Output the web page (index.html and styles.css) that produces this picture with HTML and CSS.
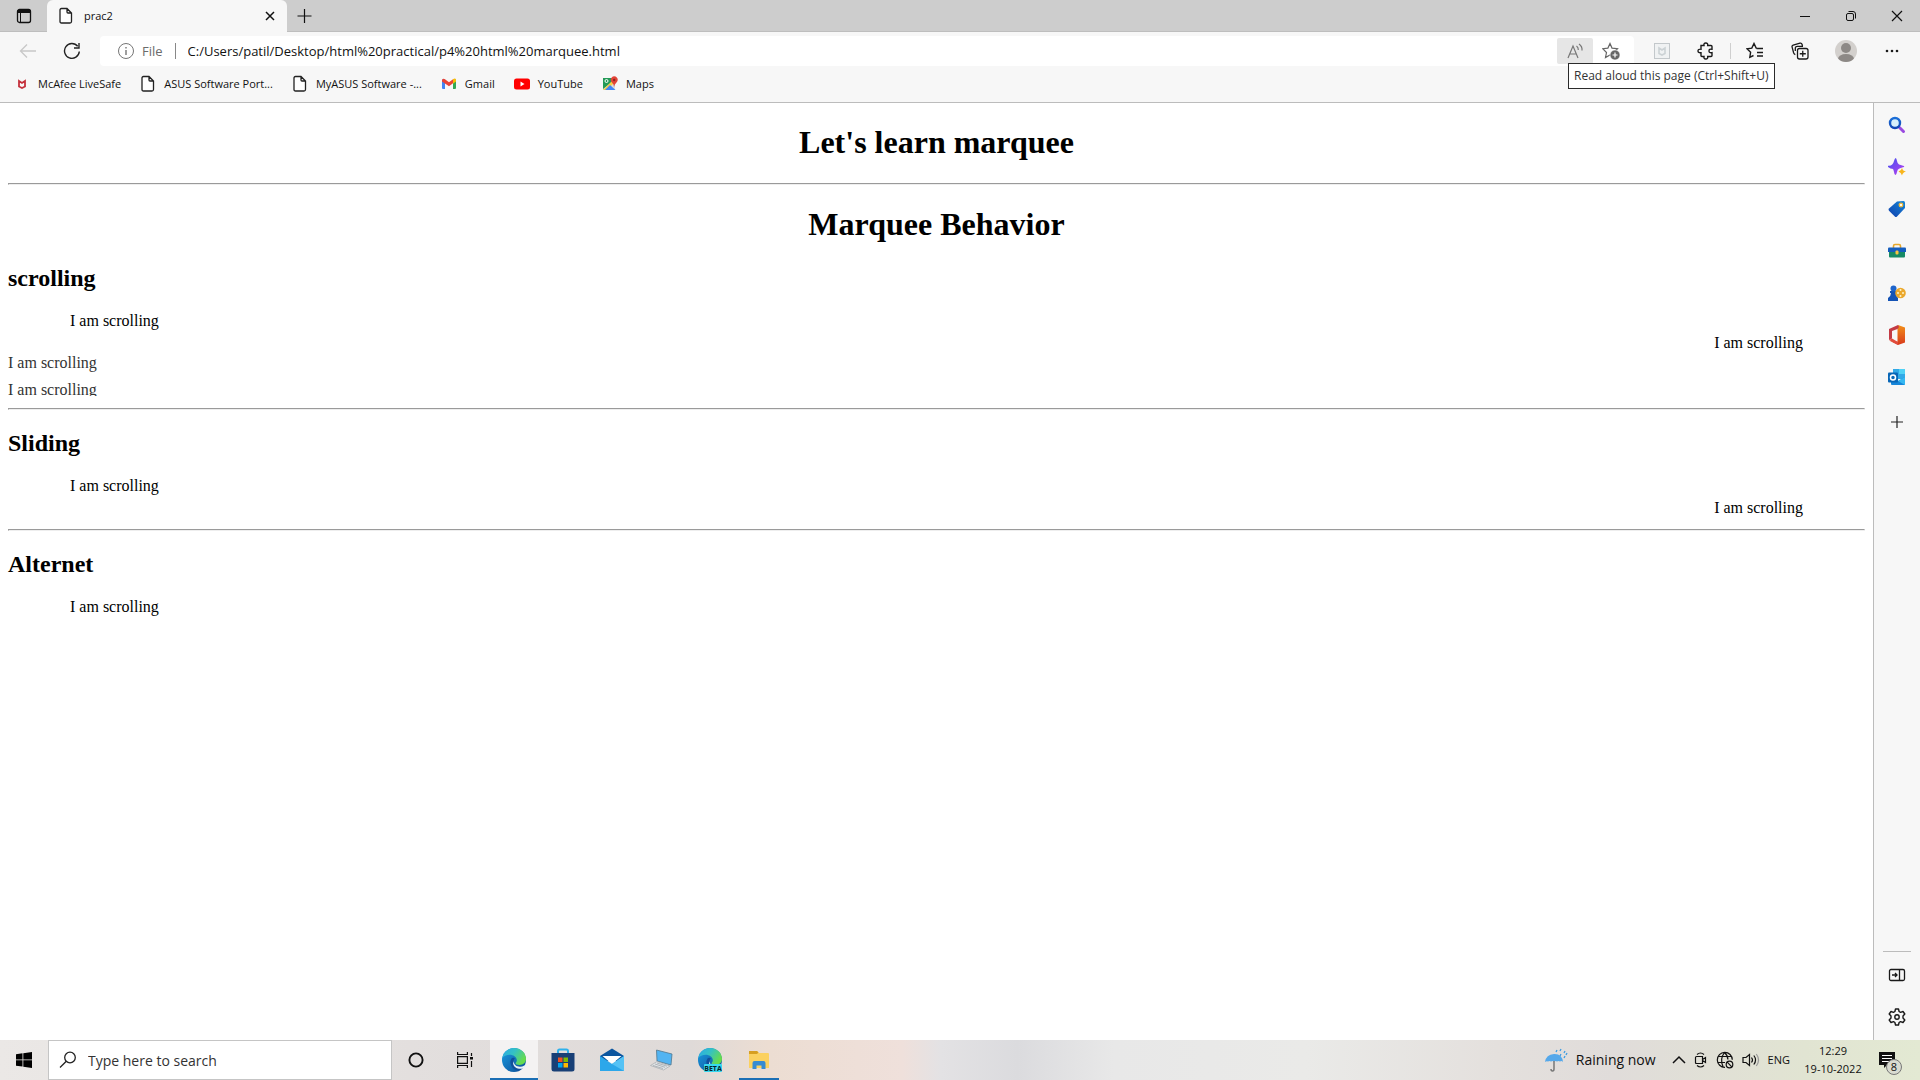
FILE: index.html
```html
<!DOCTYPE html>
<html lang="en">
<head>
<meta charset="utf-8">
<title>prac2</title>
<link rel="stylesheet" href="styles.css">
</head>
<body>
<svg class="defs" aria-hidden="true">
  <defs>
    <linearGradient id="edgeBlue" x1="0" y1="0" x2="1" y2="1"><stop offset="0" stop-color="#1b9de2"/><stop offset="1" stop-color="#0c4a94"/></linearGradient>
    <linearGradient id="edgeGreen" x1="0" y1="0" x2="1" y2="0.5"><stop offset="0" stop-color="#2aa9e8"/><stop offset="0.5" stop-color="#35c1c4"/><stop offset="1" stop-color="#66dc4c"/></linearGradient>
    <linearGradient id="lens" x1="0" y1="0" x2="0" y2="1"><stop offset="0" stop-color="#1b6fd8"/><stop offset="1" stop-color="#1246b4"/></linearGradient>
    <linearGradient id="spark" x1="0" y1="0" x2="1" y2="1"><stop offset="0" stop-color="#3b52f0"/><stop offset="1" stop-color="#c03ff0"/></linearGradient>
    <linearGradient id="tag" x1="1" y1="0" x2="0" y2="1"><stop offset="0" stop-color="#1787d6"/><stop offset="1" stop-color="#0f3fae"/></linearGradient>
    <linearGradient id="office" x1="0" y1="0" x2="0" y2="1"><stop offset="0" stop-color="#f29019"/><stop offset="1" stop-color="#d8391c"/></linearGradient>
    <symbol id="doc" viewBox="0 0 16 18"><path d="M3.5 1.5h5.5l4.500 4.500v8.500q0 1.500-1.500 1.500h-8.500q-1.500 0-1.500-1.500v-11.500q0-1.500 1.500-1.500zM9 1.500v3.500q0 1 1 1h3.500" fill="#fff" stroke="#222" stroke-width="1.300"/></symbol>
    <symbol id="edge" viewBox="0 0 24 24">
      <circle cx="12" cy="12" r="12" fill="url(#edgeBlue)"/>
      <path d="M0.300 10C1.500 4 6.300 0 12 0c7 0 12 5 12 10.800 0 4-3 6.200-6.400 6.200-2.700 0-4.300-1-4-2 .8-1 1.200-1.800 1.200-2.800C14.800 9 11 6.800 7.800 6.800 4.500 6.800 1.500 8.200.3 10z" fill="url(#edgeGreen)"/>
      <path d="M9.500 10.500c-3 4 .2 12 7.500 12 2-.8 4-2.500 5.200-4.600-5 2.200-10.500.2-10.700-4.400 0-1.500.8-2.500 1.500-3-1.200-1-2.700-.8-3.500 0z" fill="#114f9b"/>
      <path d="M11.600 13.300c.2 5 6 6.900 10.800 4.300 1-.6 1.300-.1.800.8l-1.500 1.800c-2 .8-4 .8-6 .2-3.500-1-5.500-4-4.100-7.100z" fill="#e8f1f8"/>
    </symbol>
  </defs>
</svg>

<div class="tab-strip">
  <button class="tab-actions" aria-label="Tab actions menu"><svg width="16" height="16" viewBox="0 0 16 16"><rect x="1.500" y="1.500" width="13" height="13" rx="2" fill="none" stroke="#111" stroke-width="1.300"/><path d="M1.500 2h13v3h-13z" fill="#111"/><path d="M4.500 5v9.500" stroke="#111"/></svg></button>
  <div class="tab">
    <svg width="16" height="18"><use href="#doc"/></svg>
    <span class="tab-title">prac2</span>
    <button class="tab-close" aria-label="Close tab"><svg width="10" height="10" viewBox="0 0 10 10"><path d="M1 1l8 8M9 1L1 9" stroke="#111" stroke-width="1.500"/></svg></button>
  </div>
  <button class="new-tab" aria-label="New tab"><svg width="16" height="16" viewBox="0 0 16 16"><path d="M8.500 1v14M1.500 8h14" stroke="#111" stroke-width="1.200"/></svg></button>
  <div class="window-controls">
    <button aria-label="Minimize"><svg width="12" height="12"><path d="M1 6.500h10" stroke="#111"/></svg></button>
    <button aria-label="Restore"><svg width="12" height="12" viewBox="0 0 12 12" fill="none" stroke="#111"><rect x="1.500" y="3.500" width="7" height="7" rx="1.500"/><path d="M3.500 1.500h4.500q2.500 0 2.500 2.500v4.500"/></svg></button>
    <button aria-label="Close"><svg width="12" height="12"><path d="M1 1l10 10M11 1L1 11" stroke="#111" stroke-width="1.200"/></svg></button>
  </div>
</div>

<div class="toolbar">
  <button class="nav-button" aria-label="Back" disabled><svg width="18" height="16" viewBox="0 0 18 16" fill="none" stroke="#c8c8c8" stroke-width="1.300"><path d="M17 8H1.500M8 1.500L1.500 8 8 14.500"/></svg></button>
  <button class="nav-button" aria-label="Refresh"><svg width="18" height="18" viewBox="0 0 18 18" fill="none" stroke="#222" stroke-width="1.400"><path d="M16.300 9.500a7.400 7.400 0 1 1-1.600-5.200M16 1v5h-5"/></svg></button>
  <div class="address">
    <svg class="info" width="18" height="18" viewBox="0 0 18 18" fill="none" stroke="#767676"><circle cx="9" cy="9" r="7.500"/><path d="M9 8v5M9 5v1.500" stroke-width="1.400"/></svg>
    <label class="scheme" for="url">File</label>
    <input id="url" class="url" type="text" value="C:/Users/patil/Desktop/html%20practical/p4%20html%20marquee.html">
    <div class="read-aloud">
      <button class="read-button" aria-label="Read aloud"><svg width="18" height="18" viewBox="0 0 18 18" fill="none" stroke="#777" stroke-width="1.200"><path d="M2 16L7 4l5 12M3.600 12h6.800M10.500 4q2 1.500 1.800 4M13 2q3.500 2.500 3 6.500"/></svg></button>
      <div class="tooltip" role="tooltip">Read aloud this page (Ctrl+Shift+U)</div>
    </div>
    <button class="star-add" aria-label="Add to favorites"><svg width="18" height="18" viewBox="0 0 18 18"><path d="M8 1.500l2 4.600 5.500.6-4 3.800 1 5-4.500-2.500-4.500 2.500 1-5-3.800-3.800 5.200-.6z" fill="none" stroke="#666" stroke-width="1.200"/><circle cx="13" cy="13" r="5" fill="#666" stroke="#fff" stroke-width=".6"/><path d="M13 10.500v5M10.500 13h5" stroke="#fff" stroke-width="1.200"/></svg></button>
  </div>
  <button class="tool" aria-label="McAfee WebAdvisor"><svg width="16" height="16" viewBox="0 0 16 16" fill="none"><rect x=".5" y=".5" width="15" height="15" fill="#f0f2f3" stroke="#c3c8cb"/><path d="M5 5l3 2 3-2v5.500l-3 1.500-3-1.500z" stroke="#ccd2d5" stroke-width="1.600"/></svg></button>
  <button class="tool" aria-label="Extensions"><svg width="18" height="18" viewBox="0 0 18 18" fill="none" stroke="#1a1a1a" stroke-width="1.400"><path d="M4 3.500h3q-.5-2.500 1.800-2.500t1.900 2.500h3.300q1 0 1 1v2.700q-3-.6-3 1.700t3 1.800v2.800q0 1-1 1h-3.300q.4 2.500-1.900 2.500T7 14.500H5q-1 0-1-1v-2.800q-3 .4-3-1.700t3-1.800z"/></svg></button>
  <span class="divider"></span>
  <button class="tool" aria-label="Favorites"><svg width="18" height="18" viewBox="0 0 18 18" fill="none" stroke="#1a1a1a" stroke-width="1.400"><path d="M14 6.500l-3.800-.4L8 1.500 5.800 6.100 1 6.800l3.600 3.500-.8 5L7.500 13.500M10.500 6.500H17M11 10.500h6M11 14h6"/></svg></button>
  <button class="tool wide" aria-label="Collections"><svg width="18" height="18" viewBox="0 0 18 18" fill="none" stroke="#1a1a1a" stroke-width="1.300"><rect x="6.500" y="6.500" width="10.500" height="10.500" rx="2"/><path d="M11.750 8.800v6M8.800 11.750h6M4.300 12.600Q3 12 2.600 10.700L1.100 5.200q-.4-1.500 1.100-2L9 1.200q1.500-.4 2 1l.5 1.800M4.300 9V6.300q0-2 2-2H12"/></svg></button>
  <button class="tool wide" aria-label="Profile"><svg width="24" height="24" viewBox="0 0 24 24"><clipPath id="face"><circle cx="12" cy="12" r="11"/></clipPath><circle cx="12" cy="12" r="11" fill="#d3d0cd"/><g clip-path="url(#face)" fill="#8d8986"><circle cx="12" cy="9" r="5"/><ellipse cx="12" cy="20" rx="8" ry="5"/></g></svg></button>
  <button class="tool wide" aria-label="Settings and more"><svg width="16" height="4" viewBox="0 0 16 4" fill="#1a1a1a"><circle cx="3" cy="2" r="1.300"/><circle cx="8" cy="2" r="1.300"/><circle cx="13" cy="2" r="1.300"/></svg></button>
</div>

<nav class="bookmarks">
  <a href="#"><svg width="16" height="18" viewBox="0 0 16 18"><path d="M5 6l3 2 3-2v5.500l-3 1.500-3-1.500z" fill="none" stroke="#c4313c" stroke-width="1.800"/></svg>McAfee LiveSafe</a>
  <a href="#"><svg width="16" height="18"><use href="#doc"/></svg>ASUS Software Port...</a>
  <a href="#"><svg width="16" height="18"><use href="#doc"/></svg>MyASUS Software -...</a>
  <a href="#"><svg width="16" height="18" viewBox="0 0 16 18"><path d="M1 4.500h3v9.500H2q-1 0-1-1z" fill="#4285f4"/><path d="M12 4.500h3V13q0 1-1 1h-2z" fill="#34a853"/><path d="M1 5q1-2 3-.8l4 3.100 4-3.100v4L8 11.300 1 6.500z" fill="#ea4335"/><path d="M12 4.200q2.500-1.500 3 .8v1.500l-3 2.300z" fill="#fbbc04"/></svg>Gmail</a>
  <a href="#"><svg width="16" height="18" viewBox="0 0 16 18"><rect y="3.500" width="16" height="11" rx="2.500" fill="#f00"/><path d="M6.500 6.500v5l4-2.500z" fill="#fff"/></svg>YouTube</a>
  <a href="#"><svg width="16" height="18" viewBox="0 0 16 18"><path d="M1 3h12v12H1z" fill="#d9dce0"/><path d="M1 3h9v4L1 14z" fill="#249a57"/><path d="M1 15L11 5l2 2-8 8z" fill="#f9cf45"/><path d="M3 15l5-5 5.500 5z" fill="#4285f4"/><circle cx="4.500" cy="6" r="1.500" fill="none" stroke="#fff"/><path d="M12 12q0-3-2-4.500a3.500 3.500 0 1 1 4.500 0Q12.500 9 12 12z" fill="#e24438"/><circle cx="12.200" cy="5" r="1.200" fill="#8e241d"/></svg>Maps</a>
</nav>

<div class="workspace">
  <main class="page">
    <h1>Let's learn marquee</h1>
    <hr>
    <h1>Marquee Behavior</h1>
    <h2>scrolling</h2>
    <div class="marquees">
      <div class="marquee">I am scrolling</div>
      <div class="marquee right">I am scrolling</div>
    </div>
    <div class="vertical">
      <div>I am scrolling</div>
      <div class="leaving">I am scrolling</div>
    </div>
    <hr>
    <h2>Sliding</h2>
    <div class="marquees">
      <div class="marquee">I am scrolling</div>
      <div class="marquee right">I am scrolling</div>
    </div>
    <hr>
    <h2>Alternet</h2>
    <div class="marquees"><div class="marquee">I am scrolling</div></div>
  </main>
  <aside class="sidebar">
    <button aria-label="Search"><svg width="18" height="18" viewBox="0 0 18 18" fill="none"><path d="M11.500 11.500l4 4" stroke="#9a4be0" stroke-width="3" stroke-linecap="round"/><circle cx="7" cy="7" r="5" fill="#d8f0fb" stroke="url(#lens)" stroke-width="2.400"/></svg></button>
    <button aria-label="Discover"><svg width="18" height="18" viewBox="0 0 18 18"><path d="M7.500 0Q8.500 0 9 3t2 3.500 4 1.200 0 1.600-4 1.500-2 3.200T7.500 17 6 14t-1.800-3.200T.5 9.300t0-1.600T4.200 6.500 6 3 7.500 0z" fill="url(#spark)"/><path d="M14 10q.7 3 4 3.500-3.300.8-4 4-.8-3.200-3.500-4 2.700-.5 3.500-3.500z" fill="#f8b51c"/></svg></button>
    <button aria-label="Shopping"><svg width="18" height="18" viewBox="0 0 18 18"><path d="M9 1.500L15.500 1q1.500 0 1.500 1.500V8l-8 8.500q-1 1-2.200 0L1 10.800q-1-1.200 0-2.300z" fill="url(#tag)"/><circle cx="13" cy="5" r="1.800" fill="#fff" stroke="#f1bb3a" stroke-width="1.300"/></svg></button>
    <button aria-label="Tools"><svg width="18" height="18" viewBox="0 0 18 18"><path d="M5.500 6V4q0-1.500 1.500-1.500h4q1.500 0 1.500 1.500v2" fill="none" stroke="#e7a72a" stroke-width="1.600"/><path d="M1 9h16v5.500q0 1-1 1H2q-1 0-1-1z" fill="#168a66"/><path d="M0 6.500q0-1 1-1h16q1 0 1 1V10H0z" fill="#145dbe"/><rect x="7.500" y="8.500" width="3" height="4" rx="1" fill="#f9c443"/></svg></button>
    <button aria-label="Games"><svg width="18" height="18" viewBox="0 0 18 18"><path d="M2 7h7v2H8q0 3 2 5v3H0v-3q3-2 3-5H2z" fill="#1453b5"/><circle cx="5.500" cy="4.500" r="3" fill="#1e64cb"/><circle cx="12.500" cy="9" r="5.300" fill="#eba82d"/><g fill="#fff3c9"><circle cx="12.500" cy="6" r="1"/><circle cx="10" cy="9" r="1"/><circle cx="15" cy="9" r="1"/><circle cx="12.500" cy="12" r="1"/></g></svg></button>
    <button aria-label="Office"><svg width="18" height="20" viewBox="0 0 18 20"><path d="M10 0l7 2.500v15L10 20l-8-4 7.500.8V4z" fill="url(#office)"/><path d="M10 0L1 4v11l3-1.500V6l5.500-2 1.500-2z" fill="#c33b45"/><path d="M1 15l3-1.500 6 3.500v3z" fill="#e14b3c"/></svg></button>
    <button aria-label="Outlook"><svg width="18" height="18" viewBox="0 0 18 18"><path d="M5 1h11q1 0 1 1v9H5z" fill="#32a9e7"/><path d="M11 1h6v5h-6z" fill="#50d2f6"/><path d="M3 9l7 4 7-4v7q0 1-1 1H4q-1 0-1-1z" fill="#1686d9"/><path d="M17 9v8l-7-4z" fill="#35b8f1"/><rect y="4.500" width="10" height="10" rx="1" fill="#0867b7"/><circle cx="5" cy="9.500" r="2.500" fill="none" stroke="#fff" stroke-width="1.500"/></svg></button>
    <button class="customize" aria-label="Customize"><svg width="14" height="14" viewBox="0 0 14 14"><path d="M7 1v12M1 7h12" stroke="#222" stroke-width="1.200"/></svg></button>
    <div class="sidebar-end">
      <button aria-label="Hide sidebar"><svg width="18" height="14" viewBox="0 0 18 14" fill="none" stroke="#1a1a1a" stroke-width="1.300"><rect x="1.500" y="1.500" width="15" height="11" rx="1.500"/><path d="M11.500 1.500v11M4 7h5M7 5l2 2-2 2"/></svg></button>
      <button aria-label="Settings"><svg width="18" height="18" viewBox="0 0 18 18" fill="none" stroke="#1a1a1a" stroke-width="1.400"><path d="M7.500 1h3l.6 2.500 1.400.8 2.500-.8L16.800 6 15 8v2l1.800 2-1.800 2.500-2.500-.8-1.400.8-.6 2.500h-3l-.6-2.500-1.400-.8-2.500.8L1.200 12 3 10V8L1.200 6 3 3.500l2.500.8 1.400-.8z" stroke-linejoin="round"/><circle cx="9" cy="9" r="2.200"/></svg></button>
    </div>
  </aside>
</div>

<footer class="taskbar">
  <button class="task" aria-label="Start"><svg width="16" height="16" viewBox="0 0 16 16"><path d="M0 2.200L6.500 1.300V7.500H0zM7.300 1.200L16 0v7.500H7.300zM0 8.300h6.500v6.300L0 13.700zM7.300 8.300H16V16l-8.700-1.200z"/></svg></button>
  <div class="search">
    <svg width="18" height="18" viewBox="0 0 18 18" fill="none" stroke="#222" stroke-width="1.300"><circle cx="11" cy="6.500" r="5.300"/><path d="M7.300 10.300L1 16.500"/></svg>
    <input type="text" aria-label="Search" placeholder="Type here to search">
  </div>
  <div class="apps">
    <button class="task" aria-label="Cortana"><svg width="16" height="16"><circle cx="8" cy="8" r="6.600" fill="none" stroke="#111" stroke-width="1.900"/></svg></button>
    <button class="task" aria-label="Task View"><svg width="16" height="16" viewBox="0 0 16 16" fill="none" stroke="#111" stroke-width="1.200"><path d="M.6 0v2.500h9.800V0M.6 16v-2.500h9.800V16M.6 4.600h9.800v6.800H.6zM14.500 1v3M14.500 9v6"/><path d="M13 5h3v2.500h-3z" fill="#111" stroke="none"/></svg></button>
    <button class="task active" aria-label="Microsoft Edge"><svg width="24" height="24"><use href="#edge"/></svg></button>
    <button class="task" aria-label="Microsoft Store"><svg width="24" height="24" viewBox="0 0 24 24"><path d="M7 6V3q0-1.500 1.500-1.500h7q1.500 0 1.500 1.500v3" fill="none" stroke="#2fb1ec" stroke-width="2"/><path d="M.5 5h23v16q0 2.500-2.500 2.500H3Q.5 23.500.5 21z" fill="#183f76"/><path d="M7 9.500h4.500V14H7z" fill="#f25022"/><path d="M12.500 9.500H17V14h-4.500z" fill="#7fba00"/><path d="M7 15h4.500v4.500H7z" fill="#00a4ef"/><path d="M12.500 15H17v4.500h-4.500z" fill="#ffb900"/></svg></button>
    <button class="task" aria-label="Mail"><svg width="24" height="24" viewBox="0 0 24 24"><path d="M0 8l12-7.500L24 8v5H0z" fill="#0b559f"/><path d="M2.500 8h19L12 16z" fill="#fff"/><path d="M0 8l12 8 12-8v15H0z" fill="#2ca7ea"/><path d="M24 8v15L12 16z" fill="#55c2f5"/></svg></button>
    <button class="task" aria-label="This PC"><svg width="24" height="24" viewBox="0 0 24 24"><path d="M7.500 2L23 6l-1 11-14-4z" fill="#52b4f2" stroke="#52768c" stroke-width=".8"/><path d="M1.500 17.500L8 13.500l13 4.500-6.500 4z" fill="#e1e4e6" stroke="#a5abaf" stroke-width=".7"/><path d="M4 17.500l10 3M6 16l10 3.300M8 15l10 3.200" stroke="#9aa1a6" stroke-width=".7"/></svg></button>
    <button class="task" aria-label="Microsoft Edge Beta"><svg width="24" height="24" viewBox="0 0 24 24"><use href="#edge" width="24" height="24"/><rect x="6" y="16" width="18" height="8" rx="1" fill="#37d8f0"/><text class="beta" x="15" y="23" text-anchor="middle">BETA</text></svg></button>
    <button class="task open" aria-label="File Explorer"><svg width="24" height="24" viewBox="0 0 24 24"><path d="M2 3h8l2 2h9q1 0 1 1v14H2z" fill="#fbd160"/><path d="M2 3h8l1.500 1.500L10 6H2z" fill="#d79f21"/><path d="M5.500 21v-6q0-2 2-2h9q2 0 2 2v6h-4v-3.500h-5V21z" fill="#368bd2"/></svg></button>
  </div>
  <div class="tray">
    <button class="weather"><svg width="24" height="24" viewBox="0 0 24 24"><path d="M1 14Q2 6.500 10 6t9 8q-1.500-1.500-3-.5-1.500-1.200-3 0-1.500-1-3 0-1.500-1-3 0-1.500-1-3 0-1.500-.7-3 .5z" fill="#55a8ea"/><path d="M10 13v8q0 2-1.500 2T7 21" fill="none" stroke="#777" stroke-width="1.500"/><path d="M12 4l1-2M16 3l1-2M16 8l1-2M20 5l1-2M20 10l1-2M22 7l1-2" stroke="#3d9ce2" stroke-width="1.300"/></svg>Raining now</button>
    <button aria-label="Show hidden icons"><svg width="14" height="16" viewBox="0 0 14 16"><path d="M1 11l6-6 6 6" fill="none" stroke="#111" stroke-width="1.500"/></svg></button>
    <button aria-label="Meet Now"><svg width="14" height="16" viewBox="0 0 14 16" fill="none" stroke="#111" stroke-width="1.200"><path d="M3 2.500Q6.500-.5 10 2.500M3 13.500q3.500 3 7 0M2.500 4.500h6v7h-6q-1 0-1-1v-5q0-1 1-1zM8.500 7.500l3-2v5l-3-2"/></svg></button>
    <button aria-label="Network"><svg width="18" height="18" viewBox="0 0 18 18" fill="none" stroke="#111" stroke-width="1.200"><path d="M9 16.300a7.500 7.500 0 1 1 7.300-7.500M8.500 1.500Q3.500 8 7 15.500M8.500 1.500q3.500 3.300 3.400 7M2 5.500h13M1.500 11.500H9"/><circle cx="13.500" cy="13.500" r="3.300"/><path d="M11.200 11.200l4.600 4.600"/></svg></button>
    <button aria-label="Volume"><svg width="18" height="16" viewBox="0 0 18 16" fill="none" stroke="#111" stroke-width="1.200"><path d="M1 5.500h3l3.500-3v11L4 10.500H1zM9.500 5.500q2 2.500 0 5M11.800 3.500q3.500 4.500 0 9"/><path d="M14.300 2q4.500 6 0 12" stroke="#999"/></svg></button>
    <button class="language">ENG</button>
    <button class="clock"><span>12:29</span><span>19-10-2022</span></button>
    <button class="notice" aria-label="Notifications, 8 new"><svg width="16" height="16" viewBox="0 0 16 16"><path d="M0 0h16v13H8l-3 3v-3H0z" fill="#111"/><path d="M3 3.500h10M3 6.500h10M3 9.500h7" stroke="#fff"/></svg><span class="badge">8</span></button>
  </div>
</footer>
</body>
</html>
```
FILE: styles.css
```css
* { box-sizing: border-box; }

body {
  margin: 0;
  height: 100vh;
  display: flex;
  flex-direction: column;
  background: #f7f7f7;
  color: #111;
  font: 11px/16px "Open Sans", "Noto Sans", sans-serif;
}

button, input {
  margin: 0;
  padding: 0;
  border: 0;
  background: none;
  color: inherit;
  font: inherit;
}

button {
  display: flex;
  align-items: center;
  justify-content: center;
}

input { outline: 0; }
svg { flex: none; display: block; }
.defs { position: absolute; width: 0; height: 0; }

/* Tab strip */
.tab-strip {
  display: flex;
  flex: none;
  height: 32px;
  background: #cdcdcd;
  border-bottom: 1px solid #bebebe;
}
.tab-actions { width: 47px; }
.tab {
  display: flex;
  align-items: center;
  gap: 10px;
  width: 240px;
  height: 32px;
  padding: 0 11px;
  background: #f7f7f7;
  border-radius: 6px 6px 0 0;
}
.tab-title { flex: 1; }
.tab-close { width: 12px; height: 16px; }
.new-tab { width: 34px; }
.window-controls { display: flex; margin-left: auto; }
.window-controls button { width: 46px; }

/* Toolbar */
.toolbar {
  display: flex;
  flex: none;
  align-items: center;
  height: 38px;
  padding: 0 5px 0 6px;
}
.nav-button { width: 44px; height: 30px; }
.address {
  display: flex;
  flex: 1;
  align-items: center;
  height: 30px;
  margin: 0 6px;
  padding: 0 5px 0 17px;
  background: #fff;
  border-radius: 4px;
  font-size: 13px;
}
.scheme {
  margin-left: 7px;
  padding-right: 12px;
  border-right: 1px solid #888;
  color: #6b6b6b;
}
.url { flex: 1; margin-left: 12px; height: 24px; }
.read-aloud { position: relative; }
.read-button { width: 36px; height: 26px; border-radius: 2px; background: #e6e6e6; }
.tooltip {
  position: absolute;
  top: 25px;
  left: 11px;
  z-index: 1;
  padding: 4px 5px;
  border: 1px solid #2b2b2b;
  background: #fff;
  color: #333;
  font-size: 12px;
  white-space: nowrap;
}
.star-add { width: 36px; height: 26px; }
.tool { width: 44px; height: 30px; }
.tool.wide { width: 46px; }
.divider { width: 1px; height: 16px; margin: 0 2px; background: #cfcfcf; }

/* Bookmarks */
.bookmarks {
  display: flex;
  flex: none;
  align-items: center;
  gap: 19px;
  height: 33px;
  padding: 0 14px 4px;
  border-bottom: 1px solid #bcbcbc;
}
.bookmarks a {
  display: flex;
  align-items: center;
  gap: 8px;
  color: inherit;
  text-decoration: none;
}

/* Document and sidebar */
.workspace { display: flex; flex: 1; min-height: 0; }
.page {
  display: flow-root;
  flex: 1;
  padding: 0 8px;
  overflow: hidden;
  background: #fff;
  color: #000;
  font: 16px/18px "Liberation Serif", "Times New Roman", serif;
}
.page h1 { margin: 22px 0 24px; font-size: 32px; line-height: 34px; text-align: center; }
.page h2 { margin: 20px 0 21px; font-size: 24px; line-height: 26px; }
.page hr {
  margin: 12px 0 20px;
  border: 1px solid;
  border-color: #9a9a9a #eee #eee #9a9a9a;
}
.marquees { display: flex; flex-direction: column; gap: 4px; }
.marquee { padding: 0 62px; }
.right { text-align: right; }
.vertical { display: flex; flex-direction: column; gap: 9px; margin-top: 2px; color: #333; }
.leaving { height: 15px; overflow: hidden; }

.sidebar {
  display: flex;
  flex-direction: column;
  flex: none;
  width: 47px;
  padding: 1px 0 2px;
  border-left: 1px solid #bcbcbc;
}
.sidebar button { width: 46px; height: 42px; }
.sidebar .customize { margin-top: 3px; }
.sidebar-end { margin-top: auto; }
.sidebar-end::before {
  content: "";
  display: block;
  height: 1px;
  margin: 0 9px 2px;
  background: #bcbcbc;
}

/* Taskbar */
.taskbar {
  display: flex;
  flex: none;
  height: 40px;
  background: linear-gradient(90deg, #ebe8e6, #e2dedd 24%, #dfdad8 36%, #ecddd2 40%, #efe0db 47%, #e3e2e4 49%, #dbdbde 53%, #e8e8e8 58%, #eaeae8 68%, #e4e0dd 78%, #e0dcda 84%, #e1e4d2 94%, #e3e9d3);
}
.task { width: 48px; height: 40px; border-bottom: 2px solid transparent; border-top: 2px solid transparent; }
.task.active { background: #f4f2f2; border-bottom-color: #1b6fb5; }
.task.open { background: linear-gradient(#1b6fb5, #1b6fb5) bottom / 40px 2px no-repeat border-box; }
.search {
  display: flex;
  align-items: center;
  gap: 11px;
  width: 344px;
  padding: 0 10px;
  border: 1px solid #c5c5c5;
  background: #fff;
  font-size: 14px;
}
.search input { flex: 1; height: 30px; }
.search input::placeholder { color: #333; opacity: 1; }
.apps { display: flex; gap: 1px; }
.beta { font: bold 7px "Open Sans", sans-serif; fill: #06242c; }
.tray {
  display: flex;
  align-items: center;
  gap: 8px;
  margin-left: auto;
  padding-right: 4px;
}
.tray button { height: 40px; }
.tray .weather { gap: 8px; margin-right: 8px; font-size: 14px; }
.tray .clock { flex-direction: column; width: 70px; line-height: 18px; }
.tray .notice { position: relative; width: 40px; padding-right: 18px; }
.badge {
  position: absolute;
  top: 19px;
  left: 10px;
  width: 16px;
  height: 16px;
  border: 1px solid #777;
  border-radius: 8px;
  background: #d9dbd1;
  line-height: 14px;
}
```
